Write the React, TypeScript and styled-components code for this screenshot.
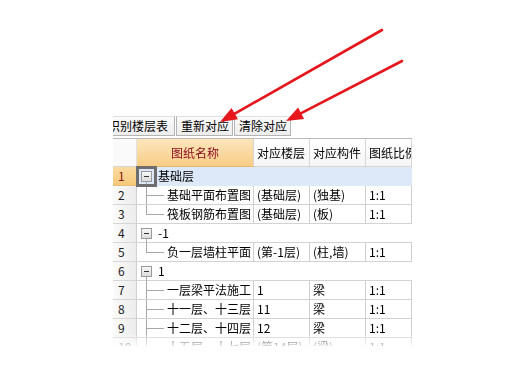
import React from "react";
import styled, { createGlobalStyle, css } from "styled-components";

const Global = createGlobalStyle`
  html, body { margin: 0; padding: 0; background: #ffffff; }
  body { font-family: "Noto Sans CJK SC", "DejaVu Sans", sans-serif; font-size: 12px; color: #000; }
`;

const COLS = "24px 117px 56px 56px 46px";

const Page = styled.div`
  position: relative;
  width: 522px;
  height: 378px;
  overflow: hidden;
  padding: 116px 0 0 113px;
  box-sizing: border-box;
`;

const Toolbar = styled.div`
  display: flex;
  width: 299px;
  height: 20px;
  overflow: hidden;
`;

const ToolButton = styled.div<{ $clipped?: boolean }>`
  flex: none;
  height: 20px;
  box-sizing: border-box;
  padding: 0 ${(p) => (p.$clipped ? "6px" : "3px")} 0 4px;
  border: 1px solid #b4b4b4;
  border-top-color: #e0e0e0;
  background: linear-gradient(#fbfbfb, #ededed);
  font-size: 12px;
  line-height: 18px;
  white-space: nowrap;
  margin-left: ${(p) => (p.$clipped ? "-10px" : "1px")};
`;

const Grid = styled.div`
  margin-top: 2px;
  width: 299px;
  height: 207px;
  overflow: hidden;
  border-top: 1px solid #b9b9b9;
  -webkit-mask-image: linear-gradient(to bottom, #000 195px, rgba(0,0,0,0.2) 207px);
  mask-image: linear-gradient(to bottom, #000 195px, rgba(0,0,0,0.2) 207px);
`;

const HeaderRow = styled.div`
  display: grid;
  grid-template-columns: ${COLS};
  height: 28px;
`;

const HeadCell = styled.div<{ $active?: boolean; $corner?: boolean }>`
  box-sizing: border-box;
  border-right: 1px solid #d6d6d6;
  border-bottom: 1px solid #d6d6d6;
  line-height: 27px;
  padding-left: 3px;
  white-space: nowrap;
  overflow: hidden;
  background: linear-gradient(#ffffff, #f5f5f5);
  ${(p) =>
    p.$active &&
    css`
      background: linear-gradient(#fce6bd, #f7cd86);
      color: #8a0a1e;
      text-align: center;
      padding-left: 0;
      border-bottom-color: #e8b66a;
    `}
  ${(p) =>
    p.$corner &&
    css`
      background: #fafafa;
      border-right-color: #e2e2e2;
    `}
`;

const Row = styled.div<{ $selected?: boolean }>`
  display: grid;
  grid-template-columns: ${COLS};
  height: 19px;
  background: ${(p) => (p.$selected ? "#dde9f9" : "#ffffff")};
`;

const NumCell = styled.div<{ $selected?: boolean }>`
  box-sizing: border-box;
  padding-left: 5px;
  line-height: 18px;
  border-right: 1px solid #cfcfcf;
  border-bottom: 1px solid #d6d6d6;
  background: linear-gradient(to right, #fbfbfb, #ececec);
  color: #222;
  ${(p) =>
    p.$selected &&
    css`
      background: linear-gradient(#fbdba3, #f6c978);
      color: #8a1a10;
      border-bottom-color: #e9bd78;
    `}
`;

const Cell = styled.div`
  box-sizing: border-box;
  padding-left: 3px;
  line-height: 18px;
  border-right: 1px solid #cfcfcf;
  border-bottom: 1px solid #d3d3d3;
  white-space: nowrap;
  overflow: hidden;
`;

const TreeCell = styled(Cell)<{ $last?: boolean }>`
  position: relative;
  padding-left: 30px;
  &::before {
    content: "";
    position: absolute;
    left: 9px;
    top: 0;
    height: ${(p) => (p.$last ? "9px" : "19px")};
    border-left: 1px solid #a8a8a8;
  }
  &::after {
    content: "";
    position: absolute;
    left: 9px;
    top: 9px;
    width: 18px;
    border-top: 1px solid #a8a8a8;
  }
`;

const GroupCell = styled.div<{ $selected?: boolean }>`
  grid-column: 2 / -1;
  box-sizing: border-box;
  display: flex;
  align-items: center;
  gap: 6px;
  padding-left: 4px;
  line-height: 18px;
  border-bottom: 1px solid ${(p) => (p.$selected ? "#dde9f9" : "#d3d3d3")};
  position: relative;
  &::after {
    content: "";
    position: absolute;
    left: 9px;
    top: 14px;
    bottom: -1px;
    border-left: 1px solid #a8a8a8;
  }
`;

const Toggle = styled.span<{ $focus?: boolean }>`
  position: relative;
  z-index: 1;
  flex: none;
  width: 9px;
  height: 9px;
  border: 1px solid #9a9a9a;
  background: linear-gradient(#f8f8f8, #dcdcdc);
  display: flex;
  align-items: center;
  justify-content: center;
  &::before {
    content: "";
    width: 5px;
    border-top: 1px solid #333;
  }
  ${(p) =>
    p.$focus &&
    css`
      outline: 3px solid #6e6e6e;
      outline-offset: 2px;
    `}
`;

const ArrowLayer = styled.svg`
  position: absolute;
  left: 0;
  top: 0;
  pointer-events: none;
`;

type R =
  | { n: number; group: true; name: string; selected?: boolean }
  | { n: number; group?: false; name: string; floor: string; comp: string; scale: string; last?: boolean };

const rows: R[] = [
  { n: 1, group: true, name: "基础层", selected: true },
  { n: 2, name: "基础平面布置图", floor: "(基础层)", comp: "(独基)", scale: "1:1" },
  { n: 3, name: "筏板钢筋布置图", floor: "(基础层)", comp: "(板)", scale: "1:1", last: true },
  { n: 4, group: true, name: "-1" },
  { n: 5, name: "负一层墙柱平面", floor: "(第-1层)", comp: "(柱,墙)", scale: "1:1", last: true },
  { n: 6, group: true, name: "1" },
  { n: 7, name: "一层梁平法施工", floor: "1", comp: "梁", scale: "1:1" },
  { n: 8, name: "十一层、十三层", floor: "11", comp: "梁", scale: "1:1" },
  { n: 9, name: "十二层、十四层", floor: "12", comp: "梁", scale: "1:1" },
  { n: 10, name: "十五层、十七层", floor: "(第14层)", comp: "(梁)", scale: "1:1" },
];

function Arrow({ x1, y1, tx, ty }: { x1: number; y1: number; tx: number; ty: number }) {
  const dx = tx - x1;
  const dy = ty - y1;
  const len = Math.hypot(dx, dy);
  const ux = dx / len;
  const uy = dy / len;
  const hl = 17;
  const hw = 6.5;
  const bx = tx - ux * hl;
  const by = ty - uy * hl;
  const nx = -uy;
  const ny = ux;
  return (
    <g>
      <line x1={x1} y1={y1} x2={bx + ux * 2} y2={by + uy * 2} stroke="#e5161c" strokeWidth={2.6} strokeLinecap="round" />
      <polygon
        points={`${tx},${ty} ${bx + nx * hw},${by + ny * hw} ${bx - nx * hw},${by - ny * hw}`}
        fill="#e5161c"
      />
    </g>
  );
}

export default function App() {
  return (
    <Page>
      <Global />
      <Toolbar>
        <ToolButton $clipped>识别楼层表</ToolButton>
        <ToolButton>重新对应</ToolButton>
        <ToolButton>清除对应</ToolButton>
      </Toolbar>
      <Grid>
        <HeaderRow>
          <HeadCell $corner />
          <HeadCell $active>图纸名称</HeadCell>
          <HeadCell>对应楼层</HeadCell>
          <HeadCell>对应构件</HeadCell>
          <HeadCell>图纸比例</HeadCell>
        </HeaderRow>
        {rows.map((r) =>
          r.group ? (
            <Row key={r.n} $selected={r.selected}>
              <NumCell $selected={r.selected}>{r.n}</NumCell>
              <GroupCell $selected={r.selected}>
                <Toggle $focus={r.selected} />
                <span>{r.name}</span>
              </GroupCell>
            </Row>
          ) : (
            <Row key={r.n}>
              <NumCell>{r.n}</NumCell>
              <TreeCell $last={r.last}>{r.name}</TreeCell>
              <Cell>{r.floor}</Cell>
              <Cell>{r.comp}</Cell>
              <Cell>{r.scale}</Cell>
            </Row>
          )
        )}
      </Grid>
      <ArrowLayer width={522} height={378} viewBox="0 0 522 378">
        <Arrow x1={382} y1={30} tx={220} ty={122} />
        <Arrow x1={402} y1={61} tx={286} ty={121} />
      </ArrowLayer>
    </Page>
  );
}
